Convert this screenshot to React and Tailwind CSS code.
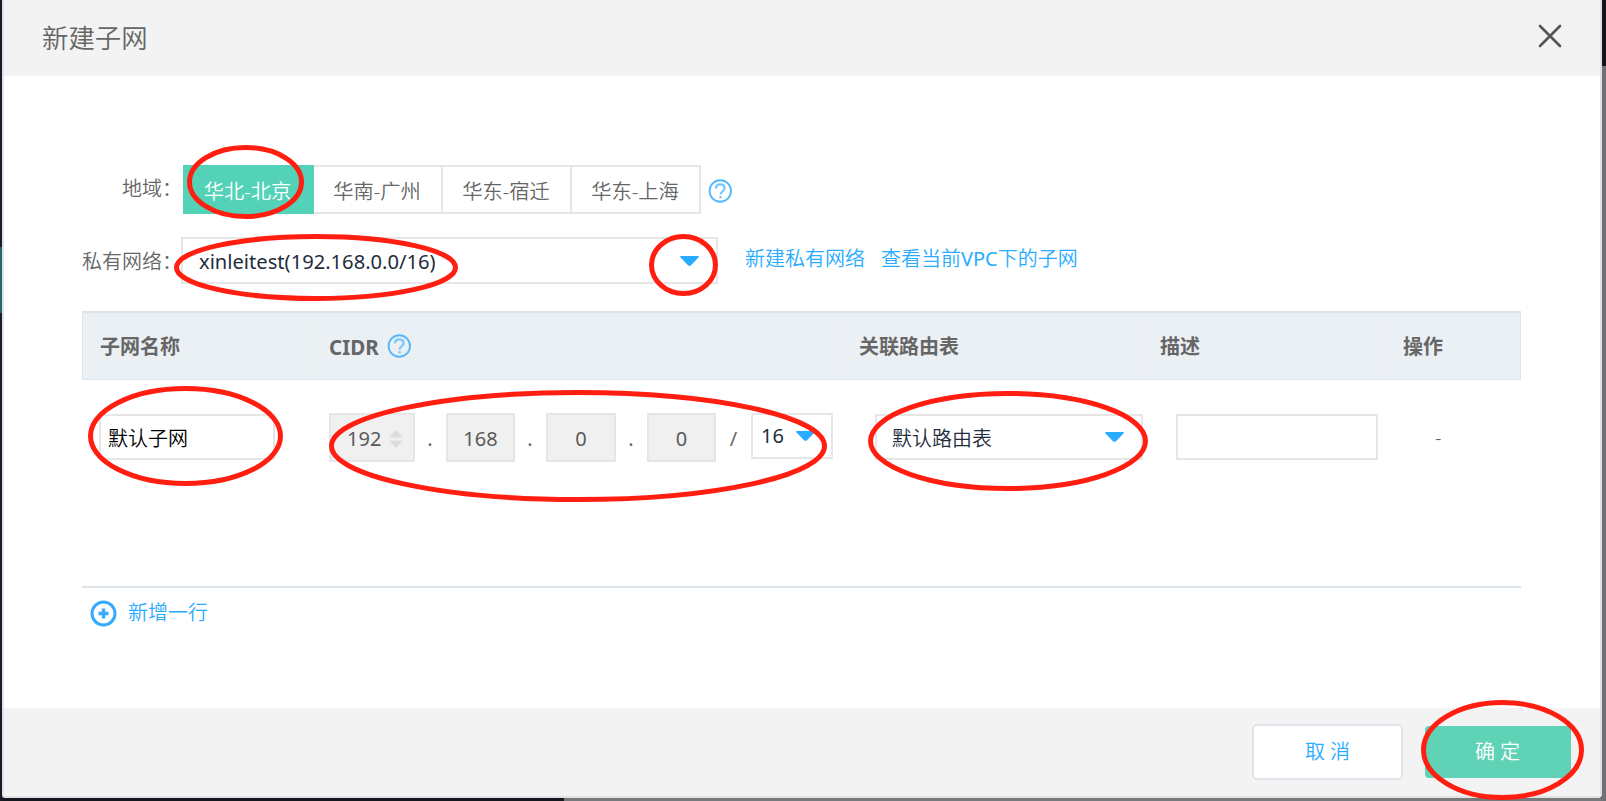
import React from "react";

const regions = ["华南-广州", "华东-宿迁", "华东-上海"];

const marks = [
  [187, 145, 304, 219],
  [174, 234, 458, 301],
  [649, 234, 718, 296],
  [88, 386, 283, 486],
  [329, 390, 827, 502],
  [868, 391, 1148, 491],
  [1421, 700, 1584, 800],
];

function Help() {
  return (
    <svg className="block h-6 w-6 shrink-0" viewBox="0 0 24 24" fill="none">
      <circle cx="12.300" cy="12" r="10.700" stroke="#55b8ff" strokeWidth="1.900" />
      <path d="M7.900 9.400C7.900 6.700 9.700 5.400 12.300 5.400s4.300 1.500 4.300 3.800c0 3-4 3.200-4 6.200" stroke="#7ac7ff" strokeWidth="2.200" />
      <circle cx="12.600" cy="18.200" r="1.300" fill="#7ac7ff" />
    </svg>
  );
}

function Caret() {
  return (
    <svg className="block h-[10px] w-[19px] shrink-0" viewBox="0 0 19 10">
      <path d="M1 0h17q1.500.4.5 1.600L11 9.200q-1.500 1.300-3 0L.5 1.600Q-.5.4 1 0Z" fill="#29abff" />
    </svg>
  );
}

function Octet({ children, className }) {
  return (
    <div className={"flex h-[49px] items-center border-2 border-[#e6e6e6] bg-[#f0f0f0] pt-[2px] text-[#5a5a5a] " + className}>
      {children}
    </div>
  );
}

function Dot() {
  return <div className="flex w-[31px] justify-center pt-[3px] pr-px">.</div>;
}

export default function App() {
  return (
    <div className="relative flex h-[801px] w-[1606px] overflow-hidden bg-[#1a1b29] font-['Noto_Sans','Noto_Sans_CJK_SC',sans-serif] text-[20px] leading-[28px] text-[#666]">
      <div className="flex w-[2px] shrink-0 flex-col">
        <div className="h-[247px] bg-[#1a1b29]" />
        <div className="h-[66px] bg-[#1d6b62]" />
      </div>
      <div className="flex w-[1600px] shrink-0 flex-col">
        <div className="flex h-[798px] flex-col rounded-b-[3px] border-x-2 border-b-2 border-[#e2e2e4] bg-white">
          <header className="flex h-[76px] shrink-0 items-center justify-between bg-[#f3f3f3] pr-[38px] pl-[38px]">
            <h1 className="text-[26.4px] leading-[36px] font-[350] text-[#666]">新建子网</h1>
            <svg className="mb-1 block h-6 w-6" viewBox="0 0 24 24" stroke="#555" strokeWidth="2.600" strokeLinecap="round">
              <path d="M2 2l20 20M22 2L2 22" />
            </svg>
          </header>

          <main className="flex h-[632px] shrink-0 flex-col pl-[78px] font-[350]">
            <div className="mt-[89px] flex h-[49px] items-center">
              <div className="mb-[2px] w-[101px] shrink-0 pl-[40px] whitespace-nowrap">地域：</div>
              <div className="flex h-[49px]">
                <div className="flex w-[131px] items-center justify-center bg-[#53d2b7] pt-[2px] pr-[2px] text-[20.3px] text-white">华北-北京</div>
                {regions.map((r) => (
                  <div key={r} className="flex w-[129px] items-center justify-center border-y-2 border-r-2 border-[#e6e6e6] pt-[2px] pr-px text-[20.3px]">
                    {r}
                  </div>
                ))}
              </div>
              <div className="mt-[2px] ml-[7px]"><Help /></div>
            </div>

            <div className="mt-[23px] flex h-[47px] items-center">
              <div className="w-[99px] shrink-0 pt-[3px] whitespace-nowrap">私有网络：</div>
              <div className="flex h-[47px] w-[537px] items-center justify-between border-2 border-[#e6e6e6] pr-[17px] pl-[16px] font-normal text-[#1f2d3d]">
                <span className="text-[20.150px]">xinleitest(192.168.0.0/16)</span>
                <Caret />
              </div>
              <div className="mb-[3px] ml-[27px] flex gap-[16px] text-[#29abff]">
                <a>新建私有网络</a>
                <a>查看当前<span className="font-normal">VPC</span>下的子网</a>
              </div>
            </div>

            <div className="mt-[27px] w-[1439px]">
              <div className="grid h-[69px] grid-cols-[231px_530px_300px_243px_1fr] border border-t-2 border-[#dde4ea] bg-[#ebf0f4] font-bold text-[#666]">
                <div className="flex items-center border-r border-[#eef1f4] pt-[2px] pl-[17px]">子网名称</div>
                <div className="flex items-center gap-[7px] border-r border-[#eef1f4] pl-[15px]">
                  <span className="w-[51px] pt-[2px] text-[20.500px]">CIDR</span>
                  <Help />
                </div>
                <div className="flex items-center border-r border-[#eef1f4] pt-[2px] pl-[15px]">关联路由表</div>
                <div className="flex items-center border-r border-[#eef1f4] pt-[2px] pl-[16px]">描述</div>
                <div className="flex items-center pt-[2px] pl-[16px]">操作</div>
              </div>
              <div className="grid h-[206px] grid-cols-[232px_530px_300px_243px_1fr] pt-[33px]">
                <div className="pt-px pl-[17px]">
                  <div className="flex h-[46px] w-[176px] items-center border-2 border-[#e6e6e6] pt-[3px] pl-[7px] text-black">默认子网</div>
                </div>
                <div className="flex h-[49px] items-center pl-[15px] font-normal">
                  <Octet className="w-[86px] pl-[16px]">
                    192
                    <svg className="ml-[8px] block h-[18px] w-[14px]" viewBox="0 0 14 18" fill="#dcdcdc">
                      <path d="M7 0l7 7.500H0zM7 18l7-7.500H0z" />
                    </svg>
                  </Octet>
                  <Dot />
                  <Octet className="w-[69px] justify-center">168</Octet>
                  <Dot />
                  <Octet className="w-[70px] justify-center">0</Octet>
                  <Dot />
                  <Octet className="w-[69px] justify-center">0</Octet>
                  <div className="flex w-[35px] justify-center pt-[2px]">/</div>
                  <div className="mb-[3px] flex h-[46px] w-[82px] items-center border-2 border-[#e6e6e6] pl-[8px] text-[#1f2d3d]">
                    <span className="w-[35px]">16</span>
                    <Caret />
                  </div>
                </div>
                <div className="pt-px pl-[31px]">
                  <div className="flex h-[46px] w-[268px] items-center justify-between border-2 border-[#e6e6e6] pr-[17px] pl-[15px] text-[#1f2d3d]">
                    <span className="pt-[3px]">默认路由表</span>
                    <Caret />
                  </div>
                </div>
                <div className="pt-px pl-[32px]">
                  <div className="h-[46px] w-[202px] border-2 border-[#e6e6e6]" />
                </div>
                <div className="flex h-[49px] items-center pl-[48px]">-</div>
              </div>
              <div className="border-t-2 border-[#dde4ea]" />
              <div className="mt-[11px] flex items-center gap-[11px] pl-[8px] text-[#29abff]">
                <svg className="block h-[27px] w-[27px]" viewBox="0 0 27 27" fill="none" stroke="#35aaff">
                  <circle cx="13.500" cy="13.500" r="11.500" strokeWidth="3" />
                  <path d="M13.500 8.500v10M8.500 13.500h10" strokeWidth="3.400" />
                </svg>
                <a>新增一行</a>
              </div>
            </div>
          </main>

          <footer className="flex flex-1 items-start bg-[#f3f3f3] pt-[16px] pl-[1248px] font-[350]">
            <button className="h-[56px] w-[151px] rounded-[5px] border-2 border-[#dfe5ea] bg-white pl-[5px] tracking-[5px] text-[#29abff]">取消</button>
            <button className="mt-[2px] ml-[22px] h-[52px] w-[146px] rounded-[4px] bg-[#60d2b6] pl-[4px] tracking-[5px] text-white">确定</button>
          </footer>
        </div>
        <div className="flex h-[3px]">
          <div className="w-[562px] bg-[#16161f]" />
          <div className="flex-1 bg-[#77787a]" />
        </div>
      </div>
      <div className="flex w-[4px] shrink-0 flex-col">
        <div className="h-[66px] bg-[#141416]" />
        <div className="flex-1 bg-[#707274]" />
      </div>

      <svg className="pointer-events-none absolute inset-0 h-[801px] w-[1606px]" viewBox="0 0 1606 801" fill="none" stroke="#ff1e10" strokeWidth="5">
        {marks.map(([x1, y1, x2, y2]) => (
          <ellipse key={x1} cx={(x1 + x2) / 2} cy={(y1 + y2) / 2} rx={(x2 - x1) / 2 - 2.5} ry={(y2 - y1) / 2 - 2.5} />
        ))}
      </svg>
    </div>
  );
}
